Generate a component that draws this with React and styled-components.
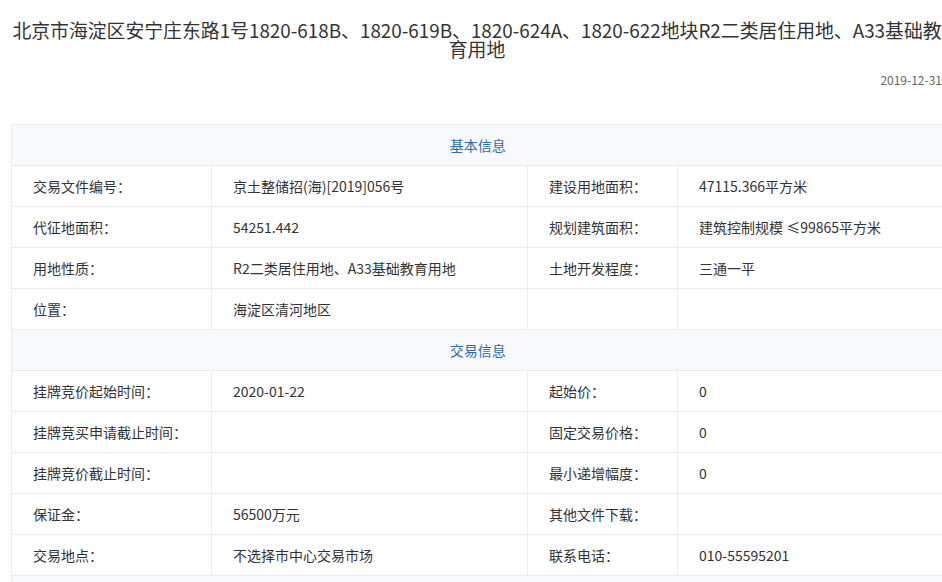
import React from 'react';
import styled, { createGlobalStyle } from 'styled-components';

const GlobalStyle = createGlobalStyle`
  html, body {
    margin: 0;
    padding: 0;
    background: #fff;
    font-family: 'Microsoft YaHei', 'Noto Sans CJK SC', 'Noto Sans', sans-serif;
    color: #333;
  }
`

const Page = styled.div`
  width: 932px;
  margin-left: 11px;
  padding-top: 20px;
`

const Title = styled.h1`
  margin: 0;
  font-size: 18.85px;
  line-height: 19px;
  font-weight: normal;
  text-align: center;
  color: #333;
`

const Date = styled.div`
  text-align: right;
  font-size: 12px;
  color: #666;
  margin-top: 14px;
  margin-right: 1px;
  line-height: 16px;
`

const Table = styled.table`
  margin-top: 36px;
  width: 932px;
  border-collapse: collapse;
  table-layout: fixed;
  font-size: 14px;
  border-top: 1px solid #e9edf2;
  border-left: 1px solid #e9edf2;
`

const HeadCell = styled.td`
  height: 40px;
  padding: 0;
  text-align: center;
  color: #2b6cb0;
  background: #f7f9fc;
  border-bottom: 1px solid #e9edf2;
`

const Cell = styled.td`
  height: 40px;
  padding: 0 0 0 21px;
  border-bottom: 1px solid #e9edf2;
  border-right: 1px solid #e9edf2;
  color: #333;
  white-space: nowrap;
`

const basic = [
  ['交易文件编号：', '京土整储招(海)[2019]056号', '建设用地面积：', '47115.366平方米'],
  ['代征地面积：', '54251.442', '规划建筑面积：', '建筑控制规模 ≤99865平方米'],
  ['用地性质：', 'R2二类居住用地、A33基础教育用地', '土地开发程度：', '三通一平'],
  ['位置：', '海淀区清河地区', '', ''],
]

const trade = [
  ['挂牌竞价起始时间：', '2020-01-22', '起始价：', '0'],
  ['挂牌竞买申请截止时间：', '', '固定交易价格：', '0'],
  ['挂牌竞价截止时间：', '', '最小递增幅度：', '0'],
  ['保证金：', '56500万元', '其他文件下载：', ''],
  ['交易地点：', '不选择市中心交易市场', '联系电话：', '010-55595201'],
]

const Rows = ({ rows }) =>
  rows.map((r, i) => (
    <tr key={i}>
      {r.map((c, j) => (
        <Cell key={j}>{c}</Cell>
      ))}
    </tr>
  ))

export default function App() {
  return (
    <>
      <GlobalStyle />
      <Page>
        <Title>
          北京市海淀区安宁庄东路1号1820-618B、1820-619B、1820-624A、1820-622地块R2二类居住用地、A33基础教育用地
        </Title>
        <Date>2019-12-31</Date>
        <Table>
          <colgroup>
            <col style={{ width: 200 }} />
            <col style={{ width: 316 }} />
            <col style={{ width: 150 }} />
            <col style={{ width: 266 }} />
          </colgroup>
          <tbody>
            <tr>
              <HeadCell colSpan={4}>基本信息</HeadCell>
            </tr>
            <Rows rows={basic} />
            <tr>
              <HeadCell colSpan={4}>交易信息</HeadCell>
            </tr>
            <Rows rows={trade} />
            <tr>
              <HeadCell colSpan={4}>&nbsp;</HeadCell>
            </tr>
          </tbody>
        </Table>
      </Page>
    </>
  )
}
